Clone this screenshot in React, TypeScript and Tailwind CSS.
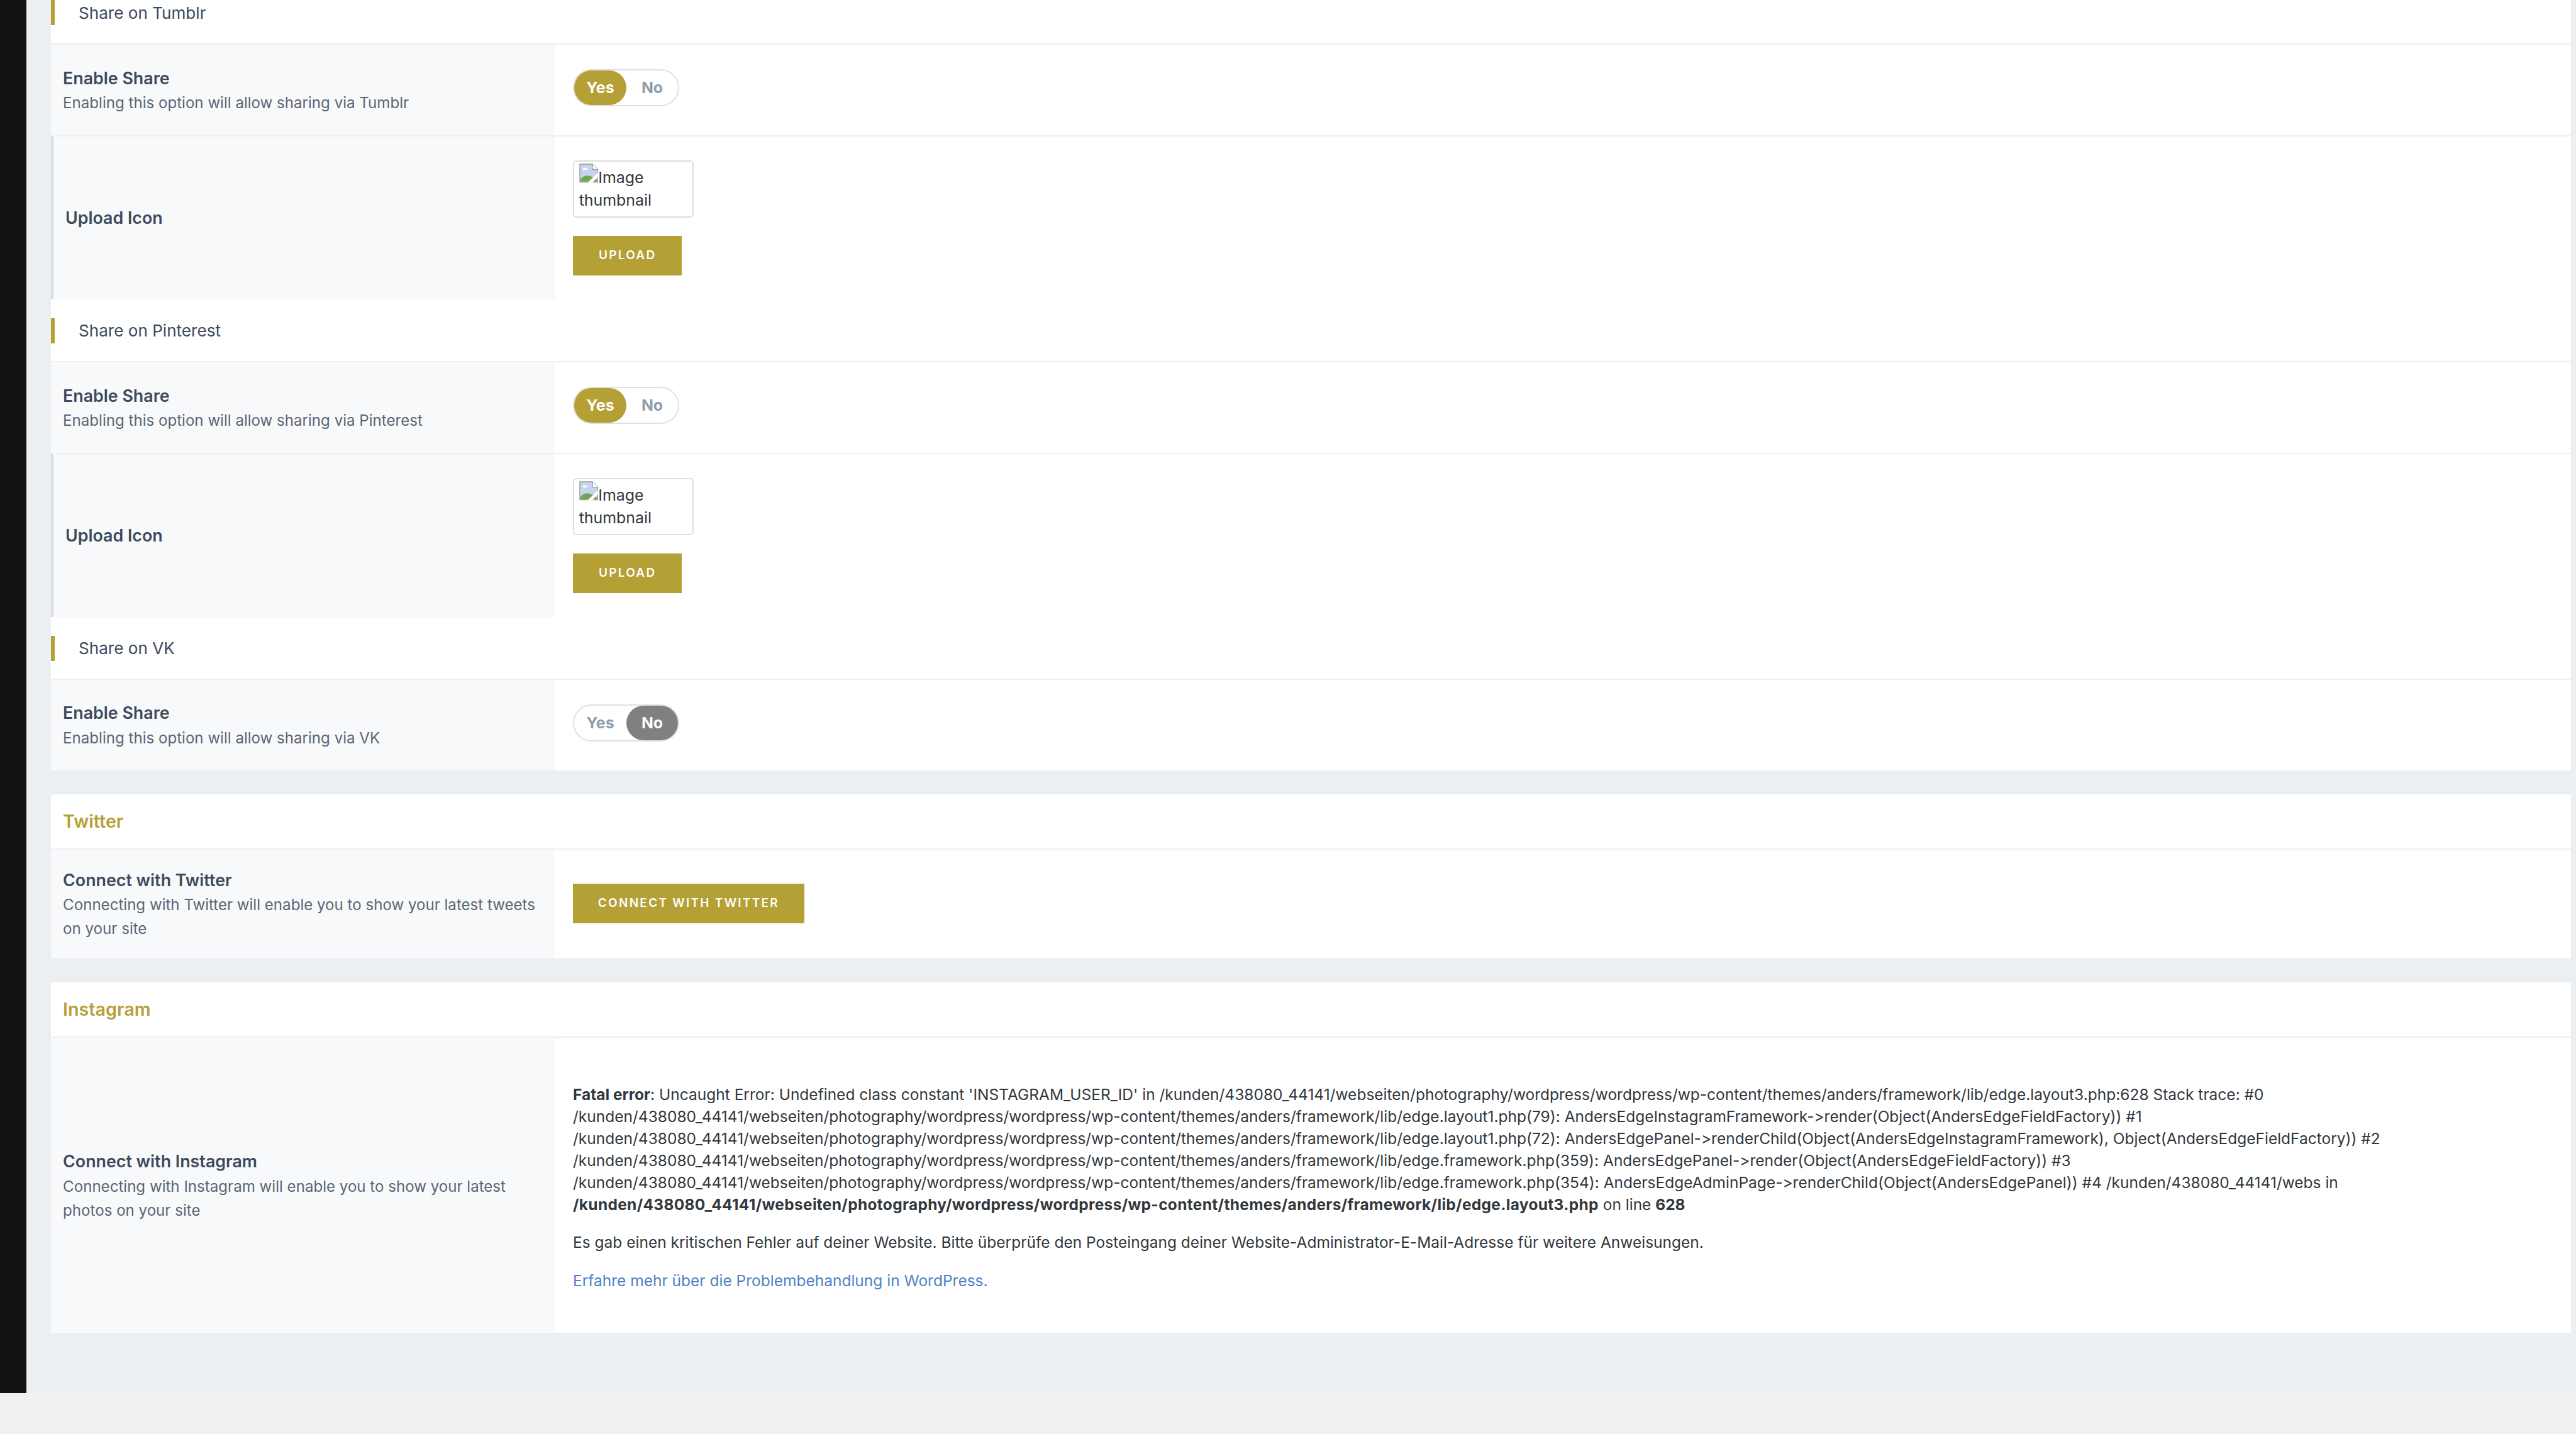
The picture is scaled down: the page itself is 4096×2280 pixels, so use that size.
const font = { fontFamily: 'Inter, "Liberation Sans", sans-serif' };

function BrokenImage() {
  return (
    <svg viewBox="0 0 16 16" className="inline-block align-baseline w-[30.6px] h-[30.6px]" aria-hidden="true">
      <path d="M0.5 0.5H11L15.5 5V15.5H0.5Z" fill="#c5d5f0" stroke="#9a9a9a" strokeWidth="0.7" />
      <path d="M11 0.5V5H15.5" fill="#fff" stroke="#9a9a9a" strokeWidth="0.7" />
      <path d="M3 5.2a1.3 1.3 0 0 1 2.6-1 1.2 1.2 0 0 1 1.7 1Z" fill="#fff" />
      <path d="M1 15V13C3 10.5 6 9.5 9 10.5C11.5 11.3 13.5 12.5 15 14V15Z" fill="#6fa84f" />
      <path d="M7 15.8L15.8 7.5V10.5L11 15.8Z" fill="#fff" />
    </svg>
  );
}

function Toggle({ on }: { on: boolean }) {
  const active = on ? 'bg-[#b5a036] text-white' : 'bg-[#808080] text-white';
  const idle = 'text-[#909ca8]';
  return (
    <div className="flex w-[169.5px] h-[59.4px] rounded-full border-2 border-[#e0e0e0] bg-white text-[24.9px] font-bold p-[0.2px]">
      <div className={`flex-1 flex items-center justify-center rounded-full ${on ? active : idle}`}>Yes</div>
      <div className={`flex-1 flex items-center justify-center rounded-full ${on ? idle : active}`}>No</div>
    </div>
  );
}

function Line() {
  return <div className="h-[2px] bg-[#efefef]" />;
}

function ShareHeader({ title, first }: { title: string; first?: boolean }) {
  return (
    <div className={first ? 'h-[69px]' : 'h-[97.7px] pt-[29.7px]'}>
      <div className="h-[40.2px] border-l-[6px] border-[#b5a036] pl-[38.5px] flex items-center text-[26.1px] text-[#3d4a5c]">
        {title}
      </div>
    </div>
  );
}

function Label({ title, desc, bar }: { title: string; desc?: string; bar?: boolean }) {
  return (
    <div
      className={`w-[801.8px] shrink-0 bg-[#f8f9fb] flex flex-col justify-center pr-[24px] ${
        bar ? 'border-l-[4px] border-[#d8dde6] pl-[19.5px]' : 'pl-[19.6px]'
      } ${desc ? 'pt-[2px]' : ''}`}
    >
      <div className="text-[26.8px] leading-[38.3px] font-semibold text-[#3d4a5c]">{title}</div>
      {desc && <div className="text-[24.1px] leading-[38.3px] mt-[2px] text-[#5b6675]">{desc}</div>}
    </div>
  );
}

function GoldButton({ text, width }: { text: string; width: string }) {
  return (
    <div className={`${width} h-[62.7px] bg-[#b5a036] text-white flex items-center justify-center text-[19px] font-semibold tracking-[0.12em]`}>
      {text}
    </div>
  );
}

function EnableRow({ name, on }: { name: string; on: boolean }) {
  return (
    <div className="flex h-[143.7px]">
      <Label title="Enable Share" desc={`Enabling this option will allow sharing via ${name}`} />
      <div className="flex-1 pl-[28.7px] pt-[39px]">
        <Toggle on={on} />
      </div>
    </div>
  );
}

function UploadRow() {
  return (
    <div className="flex h-[259.6px]">
      <Label title="Upload Icon" bar />
      <div className="flex-1 pl-[28.7px] flex flex-col justify-center">
        <div className="w-[191.6px] h-[91px] rounded-[6px] border-2 border-[#dedede] bg-white pl-[7.7px] pt-[2.7px] text-[24.9px] leading-[36.4px] text-[#32373c] mb-[28.7px]">
          <BrokenImage />Image<br />thumbnail
        </div>
        <GoldButton text="UPLOAD" width="w-[173.4px]" />
      </div>
    </div>
  );
}

function Share({ title, name, on, upload, first }: { title: string; name: string; on: boolean; upload: boolean; first?: boolean }) {
  return (
    <>
      <ShareHeader title={title} first={first} />
      <Line />
      <EnableRow name={name} on={on} />
      {upload && <Line />}
      {upload && <UploadRow />}
    </>
  );
}

function SectionHead({ title }: { title: string }) {
  return (
    <>
      <div className="h-[86.2px] pl-[19.6px] flex items-center text-[28.7px] font-semibold text-[#b5a036]">{title}</div>
      <Line />
    </>
  );
}

export default function App() {
  return (
    <div className="w-[4096px] h-[2280px] bg-[#f0f0f0] overflow-hidden" style={font}>
      <div className="flex h-[2214.6px]">
        <div className="w-[42px] shrink-0 bg-[#111111]" />
        <div className="flex-1 bg-[#ebeff2] pl-[38.5px] pr-[8px]">
          <div className="bg-white">
            <Share first title="Share on Tumblr" name="Tumblr" on upload />
            <Share title="Share on Pinterest" name="Pinterest" on upload />
            <Share title="Share on VK" name="VK" on={false} upload={false} />
          </div>

          <div className="bg-white mt-[38.3px]">
            <SectionHead title="Twitter" />
            <div className="flex h-[172.4px]">
              <Label title="Connect with Twitter" desc="Connecting with Twitter will enable you to show your latest tweets on your site" />
              <div className="flex-1 pl-[28.7px] pt-[54px]">
                <GoldButton text="CONNECT WITH TWITTER" width="w-[367.8px]" />
              </div>
            </div>
          </div>

          <div className="bg-white mt-[38.3px]">
            <SectionHead title="Instagram" />
            <div className="flex h-[469.4px]">
              <Label title="Connect with Instagram" desc="Connecting with Instagram will enable you to show your latest photos on your site" />
              <div className="flex-1 pl-[28.7px] pt-[73px] text-[24.5px] text-[#32373c] whitespace-nowrap [font-feature-settings:'calt'_0]">
                <div className="leading-[35px]">
                  <b className="font-bold">Fatal error</b>: Uncaught Error: Undefined class constant 'INSTAGRAM_USER_ID' in /kunden/438080_44141/webseiten/photography/wordpress/wordpress/wp-content/themes/anders/framework/lib/edge.layout3.php:628 Stack trace: #0<br />
                  /kunden/438080_44141/webseiten/photography/wordpress/wordpress/wp-content/themes/anders/framework/lib/edge.layout1.php(79): AndersEdgeInstagramFramework-&gt;render(Object(AndersEdgeFieldFactory)) #1<br />
                  /kunden/438080_44141/webseiten/photography/wordpress/wordpress/wp-content/themes/anders/framework/lib/edge.layout1.php(72): AndersEdgePanel-&gt;renderChild(Object(AndersEdgeInstagramFramework), Object(AndersEdgeFieldFactory)) #2<br />
                  /kunden/438080_44141/webseiten/photography/wordpress/wordpress/wp-content/themes/anders/framework/lib/edge.framework.php(359): AndersEdgePanel-&gt;render(Object(AndersEdgeFieldFactory)) #3<br />
                  /kunden/438080_44141/webseiten/photography/wordpress/wordpress/wp-content/themes/anders/framework/lib/edge.framework.php(354): AndersEdgeAdminPage-&gt;renderChild(Object(AndersEdgePanel)) #4 /kunden/438080_44141/webs in<br />
                  <b className="font-bold tracking-[0.31px]">/kunden/438080_44141/webseiten/photography/wordpress/wordpress/wp-content/themes/anders/framework/lib/edge.layout3.php</b> on line <b className="font-bold">628</b>
                </div>
                <div className="leading-[35px] mt-[25px]">Es gab einen kritischen Fehler auf deiner Website. Bitte überprüfe den Posteingang deiner Website-Administrator-E-Mail-Adresse für weitere Anweisungen.</div>
                <div className="leading-[35px] mt-[26px] text-[#4f82c4]">Erfahre mehr über die Problembehandlung in WordPress.</div>
              </div>
            </div>
          </div>
        </div>
      </div>
    </div>
  );
}
